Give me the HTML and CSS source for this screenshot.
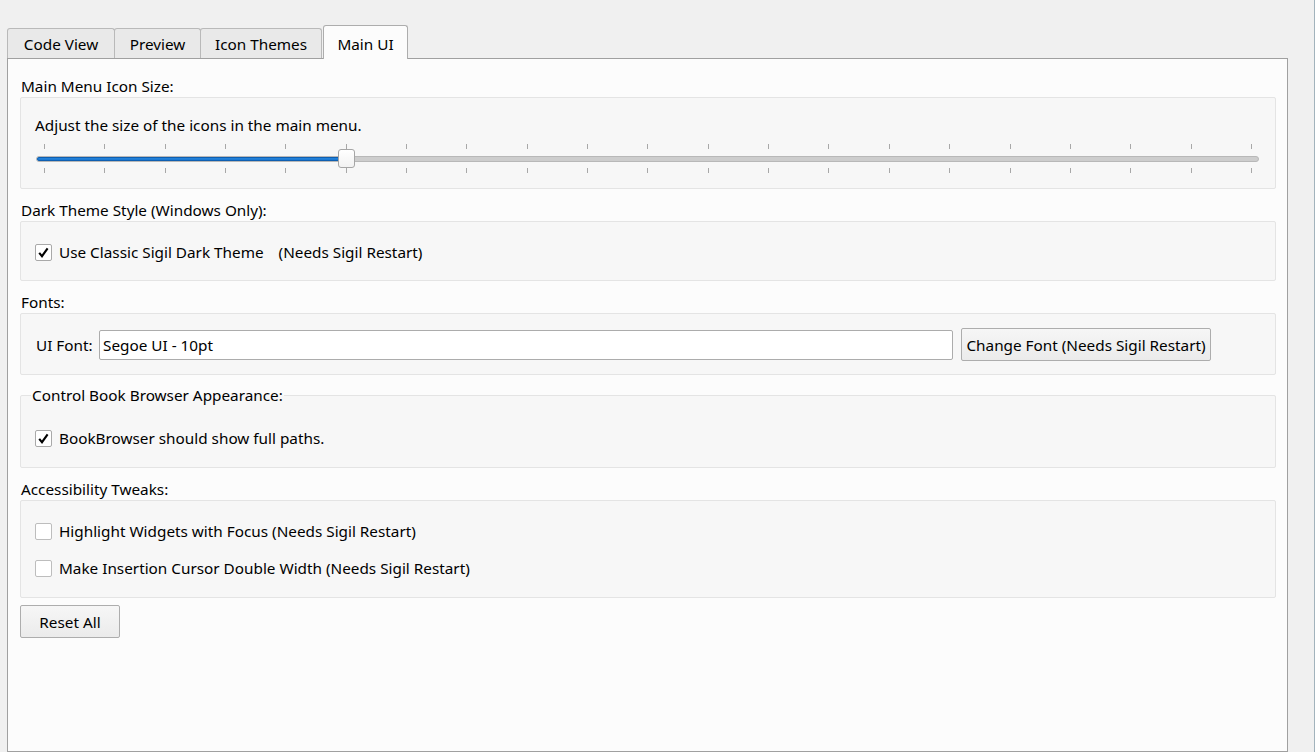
FILE: index.html
```html
<!DOCTYPE html>
<html>
<head>
<meta charset="utf-8">
<link rel="stylesheet" href="styles.css">
</head>
<body>
<div class="window">
  <div class="tabwidget">
    <div class="tabbar">
      <div class="tab t1">Code View</div>
      <div class="tab t2">Preview</div>
      <div class="tab t3">Icon Themes</div>
      <div class="tab active">Main UI</div>
    </div>
    <div class="pane">
      <div class="label">Main Menu Icon Size:</div>
      <div class="group g-slider">
        <div class="row">Adjust the size of the icons in the main menu.</div>
        <div class="slider">
          <div class="ticks">
            <i></i><i></i><i></i><i></i><i></i><i></i><i></i><i></i><i></i><i></i><i></i><i></i><i></i><i></i><i></i><i></i><i></i><i></i><i></i><i></i><i></i>
          </div>
          <div class="groove"><div class="fill" style="width: 25.4%"></div></div>
          <div class="ticks">
            <i></i><i></i><i></i><i></i><i></i><i></i><i></i><i></i><i></i><i></i><i></i><i></i><i></i><i></i><i></i><i></i><i></i><i></i><i></i><i></i><i></i>
          </div>
          <div class="handle" style="left: 302px"></div>
        </div>
      </div>

      <div class="label">Dark Theme Style (Windows Only):</div>
      <div class="group g-check1">
        <div class="row check">
          <span class="box checked"><svg width="11" height="11" viewBox="0 0 11 11"><path d="M1.2 5.8 L4 9.2 L9.6 1.4" fill="none" stroke="#000" stroke-width="2.1"/></svg></span>
          <span>Use Classic Sigil Dark Theme</span><span class="note">(Needs Sigil Restart)</span>
        </div>
      </div>

      <div class="label">Fonts:</div>
      <div class="group g-fonts">
        <span class="fontlabel">UI Font:</span>
        <div class="input">Segoe UI - 10pt</div>
        <div class="button btn-font">Change Font (Needs Sigil Restart)</div>
      </div>

      <fieldset class="group g-field">
        <legend>Control Book Browser Appearance:</legend>
        <div class="row check">
          <span class="box checked"><svg width="11" height="11" viewBox="0 0 11 11"><path d="M1.2 5.8 L4 9.2 L9.6 1.4" fill="none" stroke="#000" stroke-width="2.1"/></svg></span>
          <span>BookBrowser should show full paths.</span>
        </div>
      </fieldset>

      <div class="label">Accessibility Tweaks:</div>
      <div class="group g-access">
        <div class="row check">
          <span class="box"></span>
          <span>Highlight Widgets with Focus (Needs Sigil Restart)</span>
        </div>
        <div class="row check">
          <span class="box"></span>
          <span>Make Insertion Cursor Double Width (Needs Sigil Restart)</span>
        </div>
      </div>

      <div class="button btn-reset">Reset All</div>
    </div>
  </div>
</div>
</body>
</html>
```
FILE: styles.css
```css
* { box-sizing: border-box; }
html, body { margin: 0; padding: 0; }
body {
  background: #f0f0f0;
  font-family: "Noto Sans", "Open Sans", sans-serif;
  font-size: 15.3px;
  color: #000;
  overflow: hidden;
}
.window {
  width: 1315px;
  height: 752px;
  padding: 25px 0 0 7px;
  border-right: 1px solid #a2b3bc;
}
.tabwidget {
  width: 1281px;
  display: flex;
  flex-direction: column;
}
.tabbar {
  display: flex;
  align-items: flex-end;
  height: 33px;
}
.tab {
  height: 30px;
  background: #e9e9e9;
  border: 1px solid #b9b9b9;
  border-bottom: none;
  border-radius: 3px 3px 0 0;
  display: flex;
  justify-content: center;
  padding-top: 5px;
  line-height: 20px;
}
.t1 { width: 108px; }
.t2 { width: 87px; margin-left: -1px; }
.t3 { width: 122px; margin-left: -1px; }
.tab.active {
  width: 85px;
  height: 34px;
  margin-left: 1px;
  margin-bottom: -1px;
  background: #fcfcfc;
  border-color: #adadad;
  padding-top: 8px;
  position: relative;
  z-index: 1;
}
.pane {
  height: 694px;
  background: #fcfcfc;
  border: 1px solid #a0a0a0;
  padding: 17px 11px 0 12px;
  display: flex;
  flex-direction: column;
  align-items: flex-start;
}
.label {
  height: 21px;
  line-height: 21px;
  padding-left: 1px;
}
.group {
  width: 1256px;
  background: #f7f7f7;
  border: 1px solid #e4e4e4;
  border-radius: 2px;
  margin: 0 0 11px 0;
}
.row {
  height: 20px;
  line-height: 20px;
  display: flex;
  align-items: center;
}
.g-slider {
  height: 92px;
  padding: 17px 16px 0 14px;
}
.slider {
  position: relative;
  height: 28px;
  margin: 9px 0 0 1px;
}
.ticks {
  display: flex;
  justify-content: space-between;
  height: 5px;
  margin: 0 7px 0 8px;
}
.ticks i {
  width: 1px;
  height: 5px;
  background: #a8a8a8;
}
.groove {
  height: 6px;
  margin: 7px 0 6px;
  background: #cdcdcd;
  border: 1px solid #b8b8b8;
  border-radius: 3px;
  overflow: hidden;
}
.fill {
  height: 100%;
  background: linear-gradient(#2a8ae0, #1570cc);
  box-shadow: inset 0 0 0 1px #0f5fb0;
  border-radius: 3px 0 0 3px;
}
.handle {
  position: absolute;
  top: 5px;
  width: 17px;
  height: 19px;
  background: linear-gradient(#ffffff, #f2f2f2);
  border: 1px solid #a6a6a6;
  border-radius: 3px;
}
.g-check1 {
  height: 60px;
  padding: 20px 0 0 14px;
}
.check { gap: 7px; }
.box {
  width: 17px;
  height: 17px;
  background: #fff;
  border: 1px solid #bdbdbd;
  border-radius: 2px;
  display: flex;
  align-items: center;
  justify-content: center;
  flex: none;
}
.box.checked { border-color: #a9a9a9; }
.note { margin-left: 8px; }
.g-fonts {
  height: 62px;
  display: flex;
  align-items: center;
  padding: 1px 0 0 15px;
  margin-bottom: 10px;
}
.fontlabel { width: 63px; line-height: 20px; }
.input {
  width: 854px;
  height: 30px;
  background: #fff;
  border: 1px solid #acacac;
  border-radius: 2px;
  padding: 0 0 0 3px;
  line-height: 28px;
  margin-right: 8px;
}
.button {
  height: 33px;
  background: linear-gradient(#f6f6f6, #ebebeb);
  border: 1px solid #adadad;
  border-radius: 2px;
  display: flex;
  align-items: center;
  justify-content: center;
  line-height: 20px;
}
.btn-font { width: 250px; }
fieldset.g-field {
  margin: 0 0 11px 0;
  padding: 0 0 0 14px;
  height: 83px;
  min-inline-size: 0;
}
fieldset.g-field legend {
  padding: 0 1px;
  margin-left: -4px;
  line-height: 20px;
  height: 20px;
}
fieldset.g-field .row { margin-top: 23px; }
.g-access {
  height: 98px;
  padding: 20px 0 0 14px;
  display: flex;
  flex-direction: column;
  gap: 17px;
  margin-bottom: 7px;
}
.btn-reset { width: 100px; }
```
